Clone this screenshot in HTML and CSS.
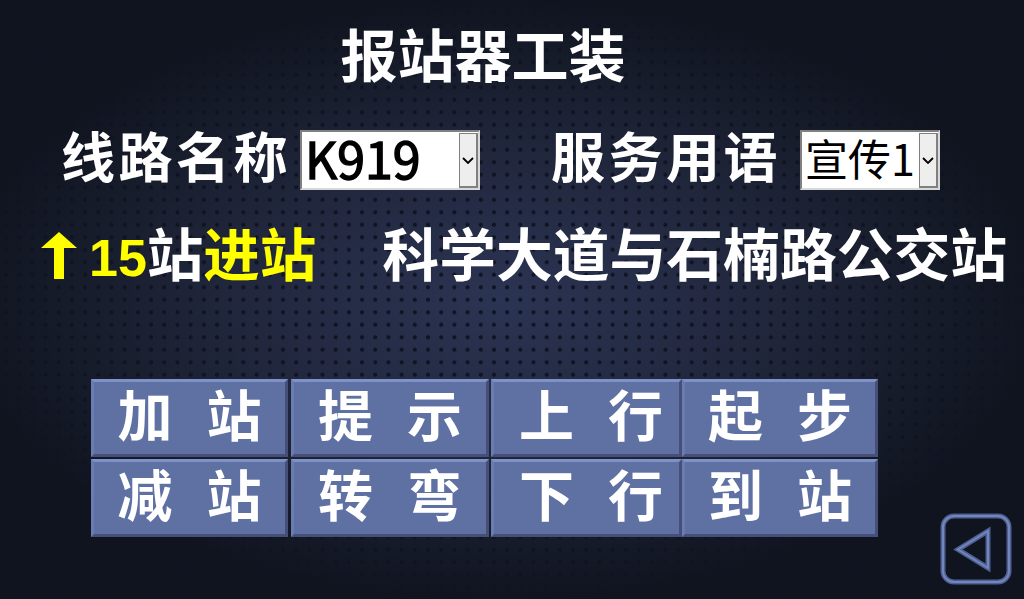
FILE: index.html
```html
<!DOCTYPE html>
<html lang="zh-CN">
<head>
    <meta charset="UTF-8">
    <title>报站器工装</title>
    <link rel="stylesheet" href="styles.css">
</head>
<body>
    <section class="main">
        <h1 class="title">报站器工装</h1>

        <div class="form__row">
            <span class="label label--route">线路名称</span>
            <div class="select select--route">
                <span class="select__value select__value--latin">K919</span>
                <span class="select__arrow">
                    <svg width="12" height="7" viewBox="0 0 12 7"><path d="M1 1l5 5 5-5" fill="none" stroke="#000" stroke-width="1.8"/></svg>
                </span>
            </div>
            <span class="label label--service">服务用语</span>
            <div class="select select--service">
                <span class="select__value">宣传1</span>
                <span class="select__arrow">
                    <svg width="12" height="7" viewBox="0 0 12 7"><path d="M1 1l5 5 5-5" fill="none" stroke="#000" stroke-width="1.8"/></svg>
                </span>
            </div>
        </div>

        <div class="status__row">
            <svg class="status__arrow" width="36" height="47" viewBox="0 0 36 47"><path d="M18 0L36 16H23V47H13V16H0z" fill="#ff0"/></svg>
            <span class="status__count">15</span><span class="status__white">站</span><span class="status__state">进站</span>
            <span class="status__name">科学大道与石楠路公交站</span>
        </div>

        <div class="buttons">
            <button class="btn"><span>加</span><span>站</span></button>
            <button class="btn"><span>提</span><span>示</span></button>
            <button class="btn"><span>上</span><span>行</span></button>
            <button class="btn"><span>起</span><span>步</span></button>
            <button class="btn"><span>减</span><span>站</span></button>
            <button class="btn"><span>转</span><span>弯</span></button>
            <button class="btn"><span>下</span><span>行</span></button>
            <button class="btn"><span>到</span><span>站</span></button>
        </div>

        <button class="back">
            <svg width="72" height="72" viewBox="0 0 72 72">
                <rect x="3" y="3" width="66" height="66" rx="11" fill="none" stroke="#4f5f92" stroke-width="5"/>
                <rect x="3" y="3" width="66" height="66" rx="11" fill="none" stroke="#7186bd" stroke-width="2"/>
                <path d="M48 18V55L18 36.500z" fill="none" stroke="#4f5f92" stroke-width="5"/>
                <path d="M48 18V55L18 36.500z" fill="none" stroke="#7186bd" stroke-width="2"/>
            </svg>
        </button>
    </section>
</body>
</html>
```

FILE: styles.css
```css
*{
    box-sizing: border-box;
    padding: 0;margin: 0;
}
body{
    width: 1024px;
    height: 599px;
    overflow: hidden;
    background-color: #10141f;
    background-image:
        radial-gradient(circle at 50% 50%, #0f1322 0, #0f1322 1.700px, transparent 2.400px),
        radial-gradient(ellipse 540px 300px at 500px 300px, #2c3454 0%, #1f2539 55%, #10141f 100%);
    background-size: 13.200px 12.500px, 100% 100%;
    background-position: -0.600px -6.500px, 0 0;
    font-family: "Noto Sans CJK SC", "Liberation Sans", sans-serif;
    color: #fff;
}
.main{
    position: relative;
    height: 599px;
    display: flex;
    flex-direction: column;
}
.title{
    font-size: 57px;
    font-weight: 700;
    line-height: 60px;
    text-align: center;
    margin: 22px 58px 0 0;
}
.form__row{
    display: flex;
    align-items: center;
    height: 60px;
    margin-top: 48px;
    padding-left: 61px;
}
.label{
    font-size: 54px;
    font-weight: 700;
    letter-spacing: 3.500px;
    line-height: 60px;
    margin-bottom: 10px;
    white-space: nowrap;
}
.label--route{
    width: 239px;
}
.label--service{
    width: 249px;
    margin-left: 71px;
}
.select{
    display: flex;
    height: 60px;
    background: #fff;
    border: 2px solid;
    border-color: #808080 #d8d8d8 #d8d8d8 #808080;
    color: #000;
}
.select--route{
    width: 180px;
}
.select--service{
    width: 140px;
}
.select__value{
    flex: 1;
    min-width: 0;
    font-size: 43px;
    line-height: 50px;
    padding-left: 3px;
    white-space: nowrap;
}
.select__value--latin{
    font-size: 50px;
    line-height: 50px;
    -webkit-text-stroke: 1.400px #000;
}
.select__arrow{
    display: flex;
    align-items: center;
    justify-content: center;
    width: 19px;
    background: #eee;
    border: 1px solid #808080;
    border-width: 1px 2px 2px 1px;
    margin: 1px 0 0;
}
.status__row{
    display: flex;
    align-items: baseline;
    height: 60px;
    margin-top: 31px;
    padding-left: 41px;
    font-size: 56.500px;
    font-weight: 700;
    line-height: 60px;
    white-space: nowrap;
}
.status__arrow{
    align-self: center;
    margin: 9px 12px 0 0;
}
.status__count{
    color: #ff0;
    font-family: "Liberation Sans", sans-serif;
    font-size: 52px;
}
.status__state{
    color: #ff0;
}
.status__name{
    margin-left: 66px;
    font-size: 56.800px;
}
.buttons{
    display: grid;
    grid-template-columns: 200px 200px 191px 196px;
    grid-template-rows: 78px 78px;
    row-gap: 2px;
    margin: 98px 0 0 91px;
    width: 787px;
}
.btn{
    display: flex;
    align-items: center;
    justify-content: center;
    gap: 34px;
    padding-bottom: 12px;
    background: #5f71a3;
    border: 3px solid;
    border-color: #7e92c8 #454f78 #454f78 #6a7db2;
    color: #fff;
    font-family: inherit;
    font-size: 55px;
    font-weight: 700;
    line-height: 1;
}
.btn:nth-child(4n+1){
    margin-right: 3px;
}
.btn:nth-child(4n+2){
    margin-right: 2px;
}
.btn:nth-child(4n+3){
    padding-left: 9px;
}
.back{
    position: absolute;
    left: 940px;
    top: 513px;
    background: none;
    border: none;
    line-height: 0;
}
```
